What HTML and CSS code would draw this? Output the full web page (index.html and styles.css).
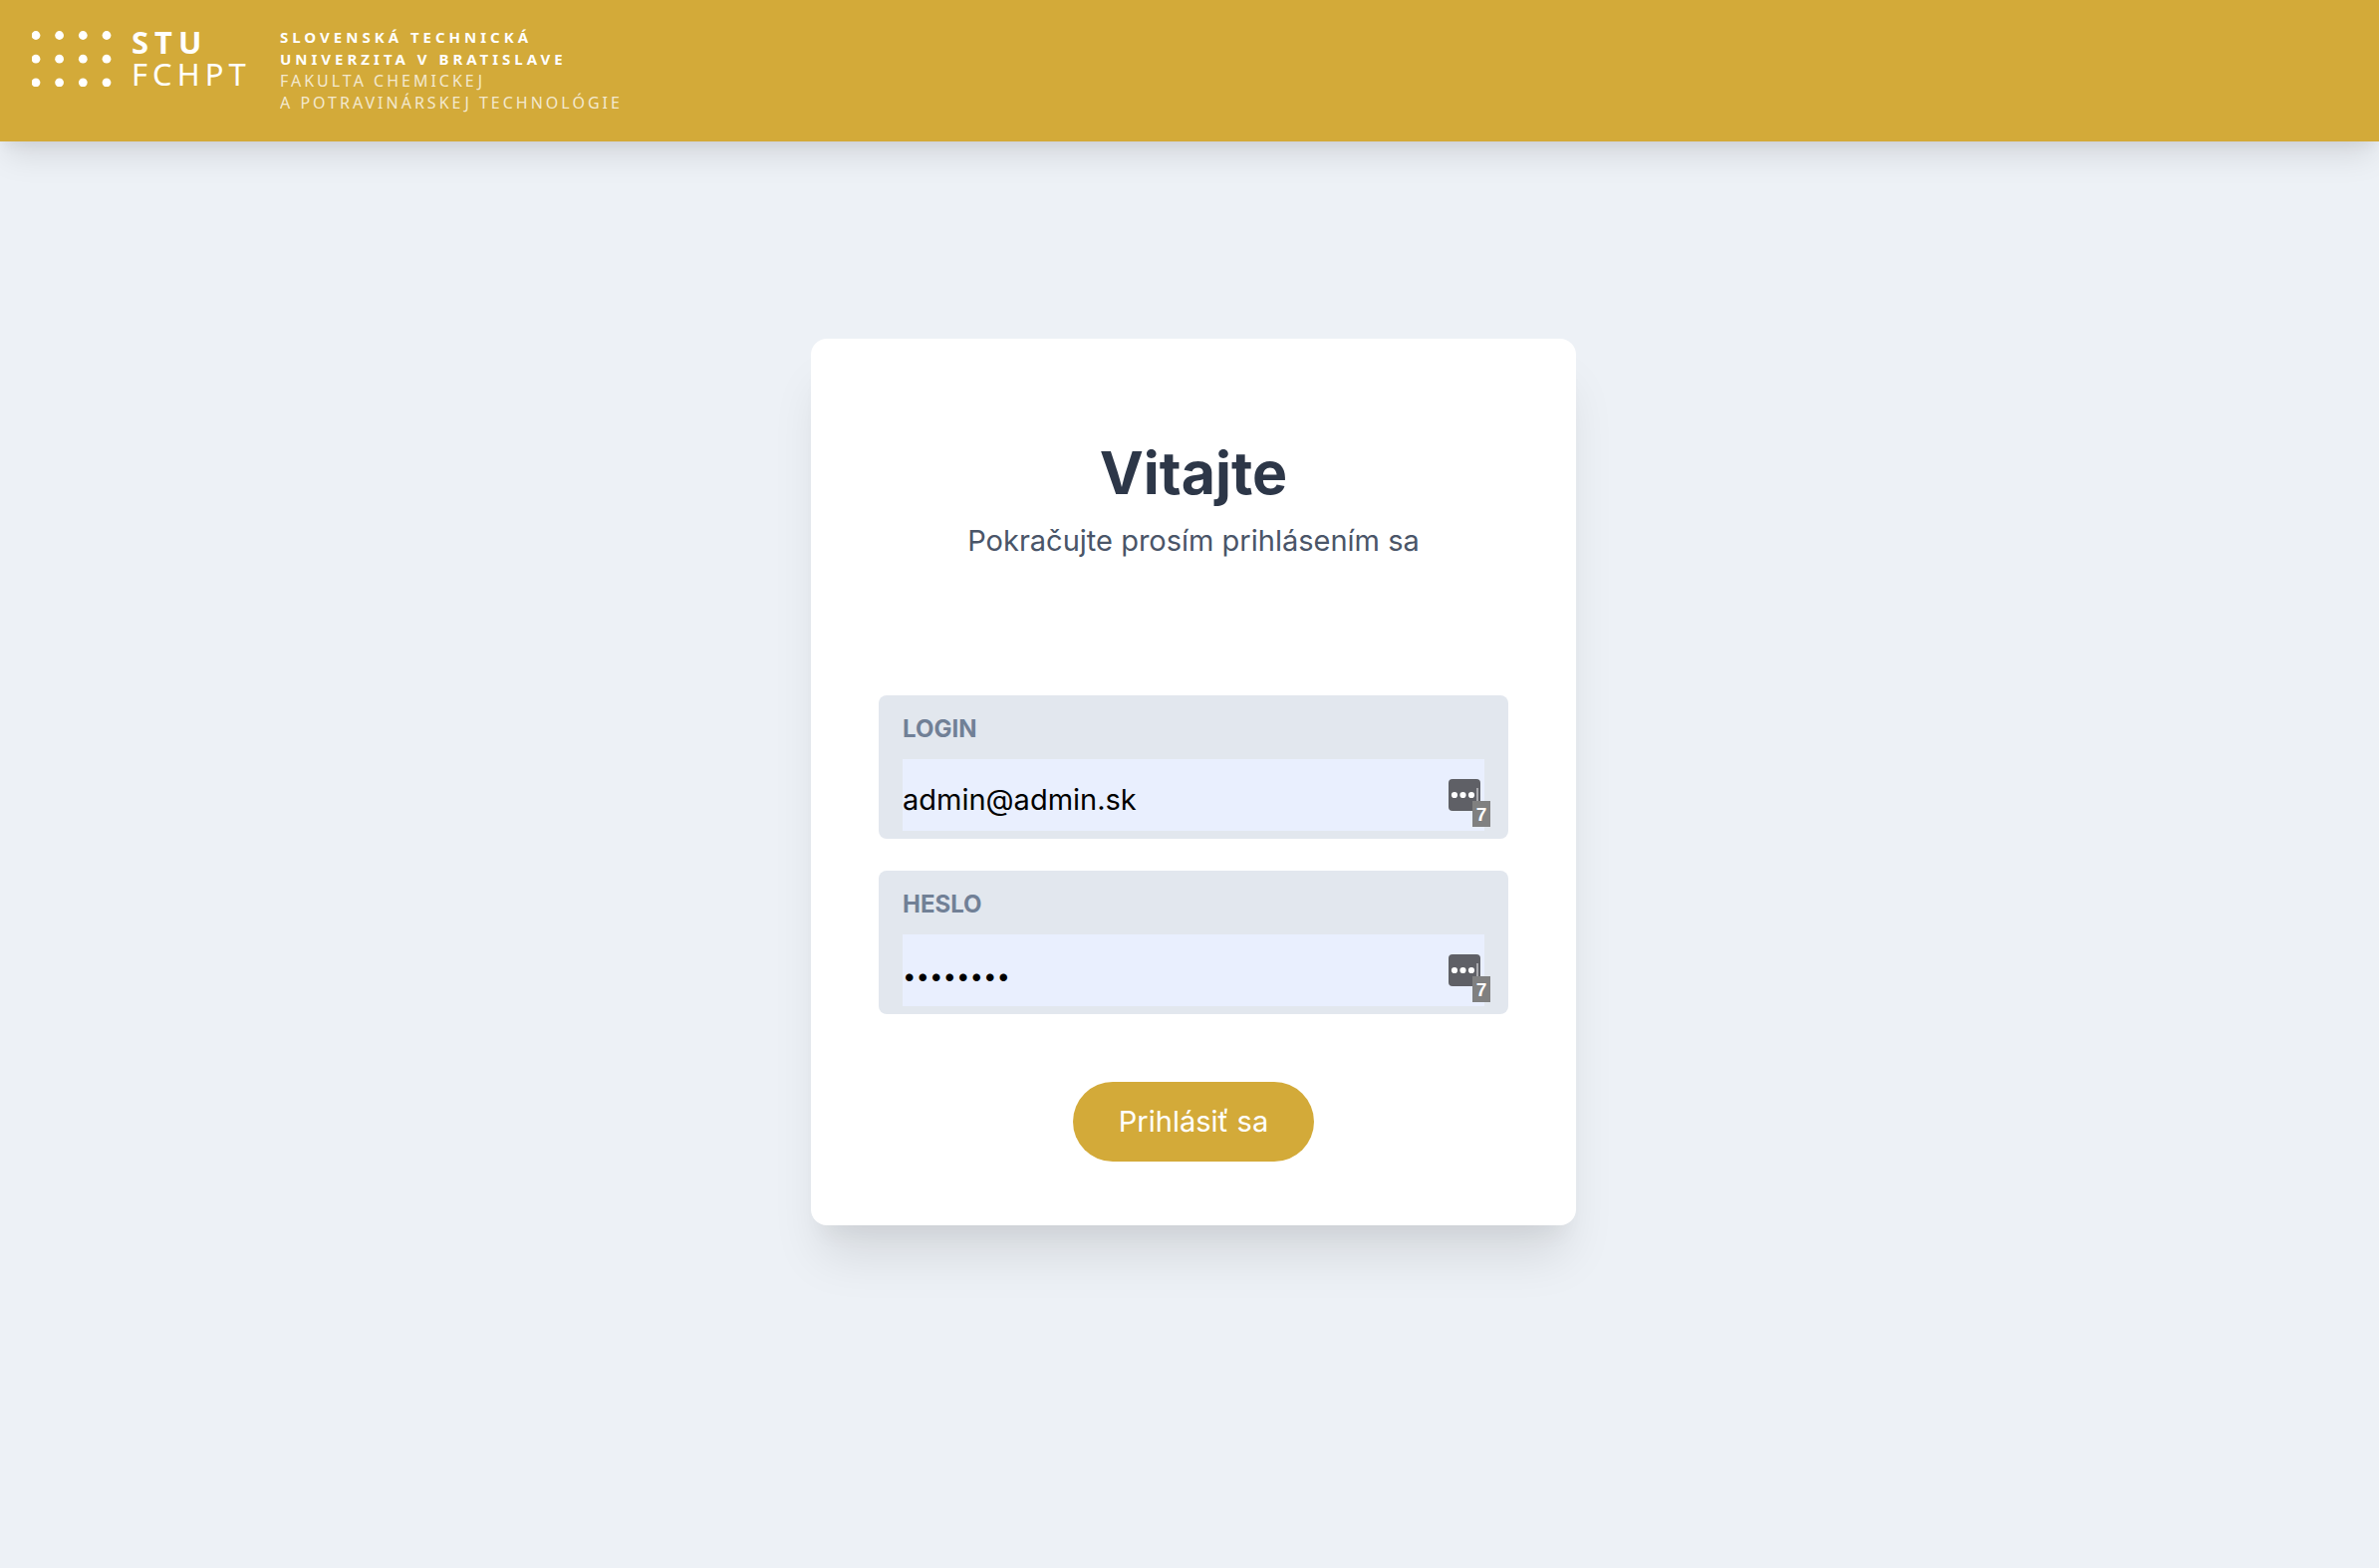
FILE: index.html
```html
<!DOCTYPE html>
<html lang="sk">
<head>
  <meta charset="utf-8">
  <meta name="viewport" content="width=device-width, initial-scale=1">
  <title>Prihlásenie</title>
  <link rel="stylesheet" href="styles.css">
</head>
<body>
  <header class="header">
    <a class="logo" href="#">
      <svg class="logo-dots" viewBox="0 0 80 56" aria-hidden="true">
        <g fill="#fff">
          <circle cx="4" cy="4.5" r="4.4"/><circle cx="27.6" cy="4.5" r="4.4"/><circle cx="51.3" cy="4.5" r="4.4"/><circle cx="75" cy="4.5" r="4.4"/>
          <circle cx="4" cy="28.2" r="4.4"/><circle cx="27.6" cy="28.2" r="4.4"/><circle cx="51.3" cy="28.2" r="4.4"/><circle cx="75" cy="28.2" r="4.4"/>
          <circle cx="4" cy="51.8" r="4.4"/><circle cx="27.6" cy="51.8" r="4.4"/><circle cx="51.3" cy="51.8" r="4.4"/><circle cx="75" cy="51.8" r="4.4"/>
        </g>
      </svg>
      <span class="logo-mark"><strong>STU</strong><span>FCHPT</span></span>
      <span class="logo-name">
        <strong>SLOVENSKÁ TECHNICKÁ</strong>
        <strong>UNIVERZITA V BRATISLAVE</strong>
        <span>FAKULTA CHEMICKEJ</span>
        <span>A POTRAVINÁRSKEJ TECHNOLÓGIE</span>
      </span>
    </a>
  </header>
  <main class="main">
    <section class="card">
      <h1 class="title">Vitajte</h1>
      <p class="subtitle">Pokračujte prosím prihlásením sa</p>
      <form class="form">
        <div class="field">
          <label class="label" for="login">LOGIN</label>
          <div class="control">
            <input class="input" id="login" type="text" value="admin@admin.sk">
            <svg class="key" viewBox="0 0 32 32" aria-hidden="true">
              <rect width="32" height="32" rx="4" fill="#5f6066"/>
              <circle cx="6" cy="16" r="3.1" fill="#fff"/><circle cx="14.5" cy="16" r="3.1" fill="#fff"/><circle cx="23" cy="16" r="3.1" fill="#fff"/>
              <path d="M29 9v14" stroke="#c9c9cc" stroke-width="1.4"/>
            </svg>
            <span class="count">7</span>
          </div>
        </div>
        <div class="field">
          <label class="label" for="password">HESLO</label>
          <div class="control">
            <input class="input input-password" id="password" type="password" value="password">
            <svg class="key" viewBox="0 0 32 32" aria-hidden="true">
              <rect width="32" height="32" rx="4" fill="#5f6066"/>
              <circle cx="6" cy="16" r="3.1" fill="#fff"/><circle cx="14.5" cy="16" r="3.1" fill="#fff"/><circle cx="23" cy="16" r="3.1" fill="#fff"/>
              <path d="M29 9v14" stroke="#c9c9cc" stroke-width="1.4"/>
            </svg>
            <span class="count">7</span>
          </div>
        </div>
        <button class="submit" type="button">Prihlásiť sa</button>
      </form>
    </section>
  </main>
</body>
</html>
```
FILE: styles.css
```css
* {
  box-sizing: border-box;
}

body {
  margin: 0;
  min-height: 100vh;
  background: #edf1f6;
  color: #4a5568;
  font-family: Inter, "Liberation Sans", sans-serif;
  font-size: 29px;
  line-height: 48px;
}

.header {
  padding: 26px 32px 24px;
  background: #d3aa39;
  box-shadow: 0 20px 30px -6px rgba(0, 0, 0, 0.1), 0 8px 12px -4px rgba(0, 0, 0, 0.05);
}

.logo {
  display: inline-flex;
  align-items: flex-start;
  color: #fff;
  font-family: "Noto Sans", "Open Sans", sans-serif;
  text-decoration: none;
  vertical-align: top;
}

.logo-dots {
  width: 80px;
  height: 56px;
  margin: 5px 20px 0 0;
}

.logo-mark,
.logo-name {
  display: flex;
  flex-direction: column;
}

.logo-mark {
  width: 149px;
  font-size: 31px;
  line-height: 32px;
  letter-spacing: 5px;
}

.logo-mark strong {
  letter-spacing: 6px;
}

.logo-name {
  padding-bottom: 4px;
  font-size: 16px;
  line-height: 22px;
  letter-spacing: 3px;
}

.logo-name strong {
  font-size: 15px;
  letter-spacing: 4px;
}

.logo-name span {
  opacity: 0.75;
}

.main {
  display: flex;
  justify-content: center;
  padding: 198px 0 64px 8px;
}

.card {
  width: 768px;
  max-width: 100%;
  padding: 96px 68px 64px;
  border-radius: 16px;
  background: #fff;
  box-shadow: 0 40px 50px -10px rgba(0, 0, 0, 0.1), 0 20px 20px -10px rgba(0, 0, 0, 0.04);
  text-align: center;
}

.title {
  margin: 0;
  color: #2d3748;
  font-size: 59px;
  font-weight: 700;
  line-height: 78px;
}

.subtitle {
  margin: 5px 0 0;
}

.form {
  display: flex;
  flex-direction: column;
  align-items: center;
  gap: 32px;
  margin-top: 131px;
}

.field {
  align-self: stretch;
  padding: 16px 24px 8px;
  border-radius: 8px;
  background: #e2e7ee;
  text-align: left;
}

.label {
  display: block;
  color: #718096;
  font-size: 24px;
  font-weight: 700;
  line-height: 36px;
}

.control {
  position: relative;
  margin-top: 12px;
}

.input {
  display: block;
  width: 100%;
  height: 72px;
  padding: 8px 0 0;
  border: 0;
  border-radius: 0;
  background: #e9effe;
  color: #000;
  font: inherit;
}

.input-password {
  padding-top: 10px;
  font-size: 24px;
}

.key {
  position: absolute;
  top: 20px;
  right: 4px;
  width: 32px;
  height: 32px;
}

.count {
  position: absolute;
  top: 42px;
  right: -6px;
  width: 18px;
  height: 26px;
  background: #808080;
  color: #fff;
  font-family: "Liberation Sans", sans-serif;
  font-size: 19px;
  font-weight: 700;
  line-height: 27px;
  text-align: center;
}

.submit {
  margin-top: 36px;
  padding: 16px 46px;
  border: 0;
  border-radius: 40px;
  background: #d3aa39;
  color: #fff;
  font: inherit;
  cursor: pointer;
}
```
